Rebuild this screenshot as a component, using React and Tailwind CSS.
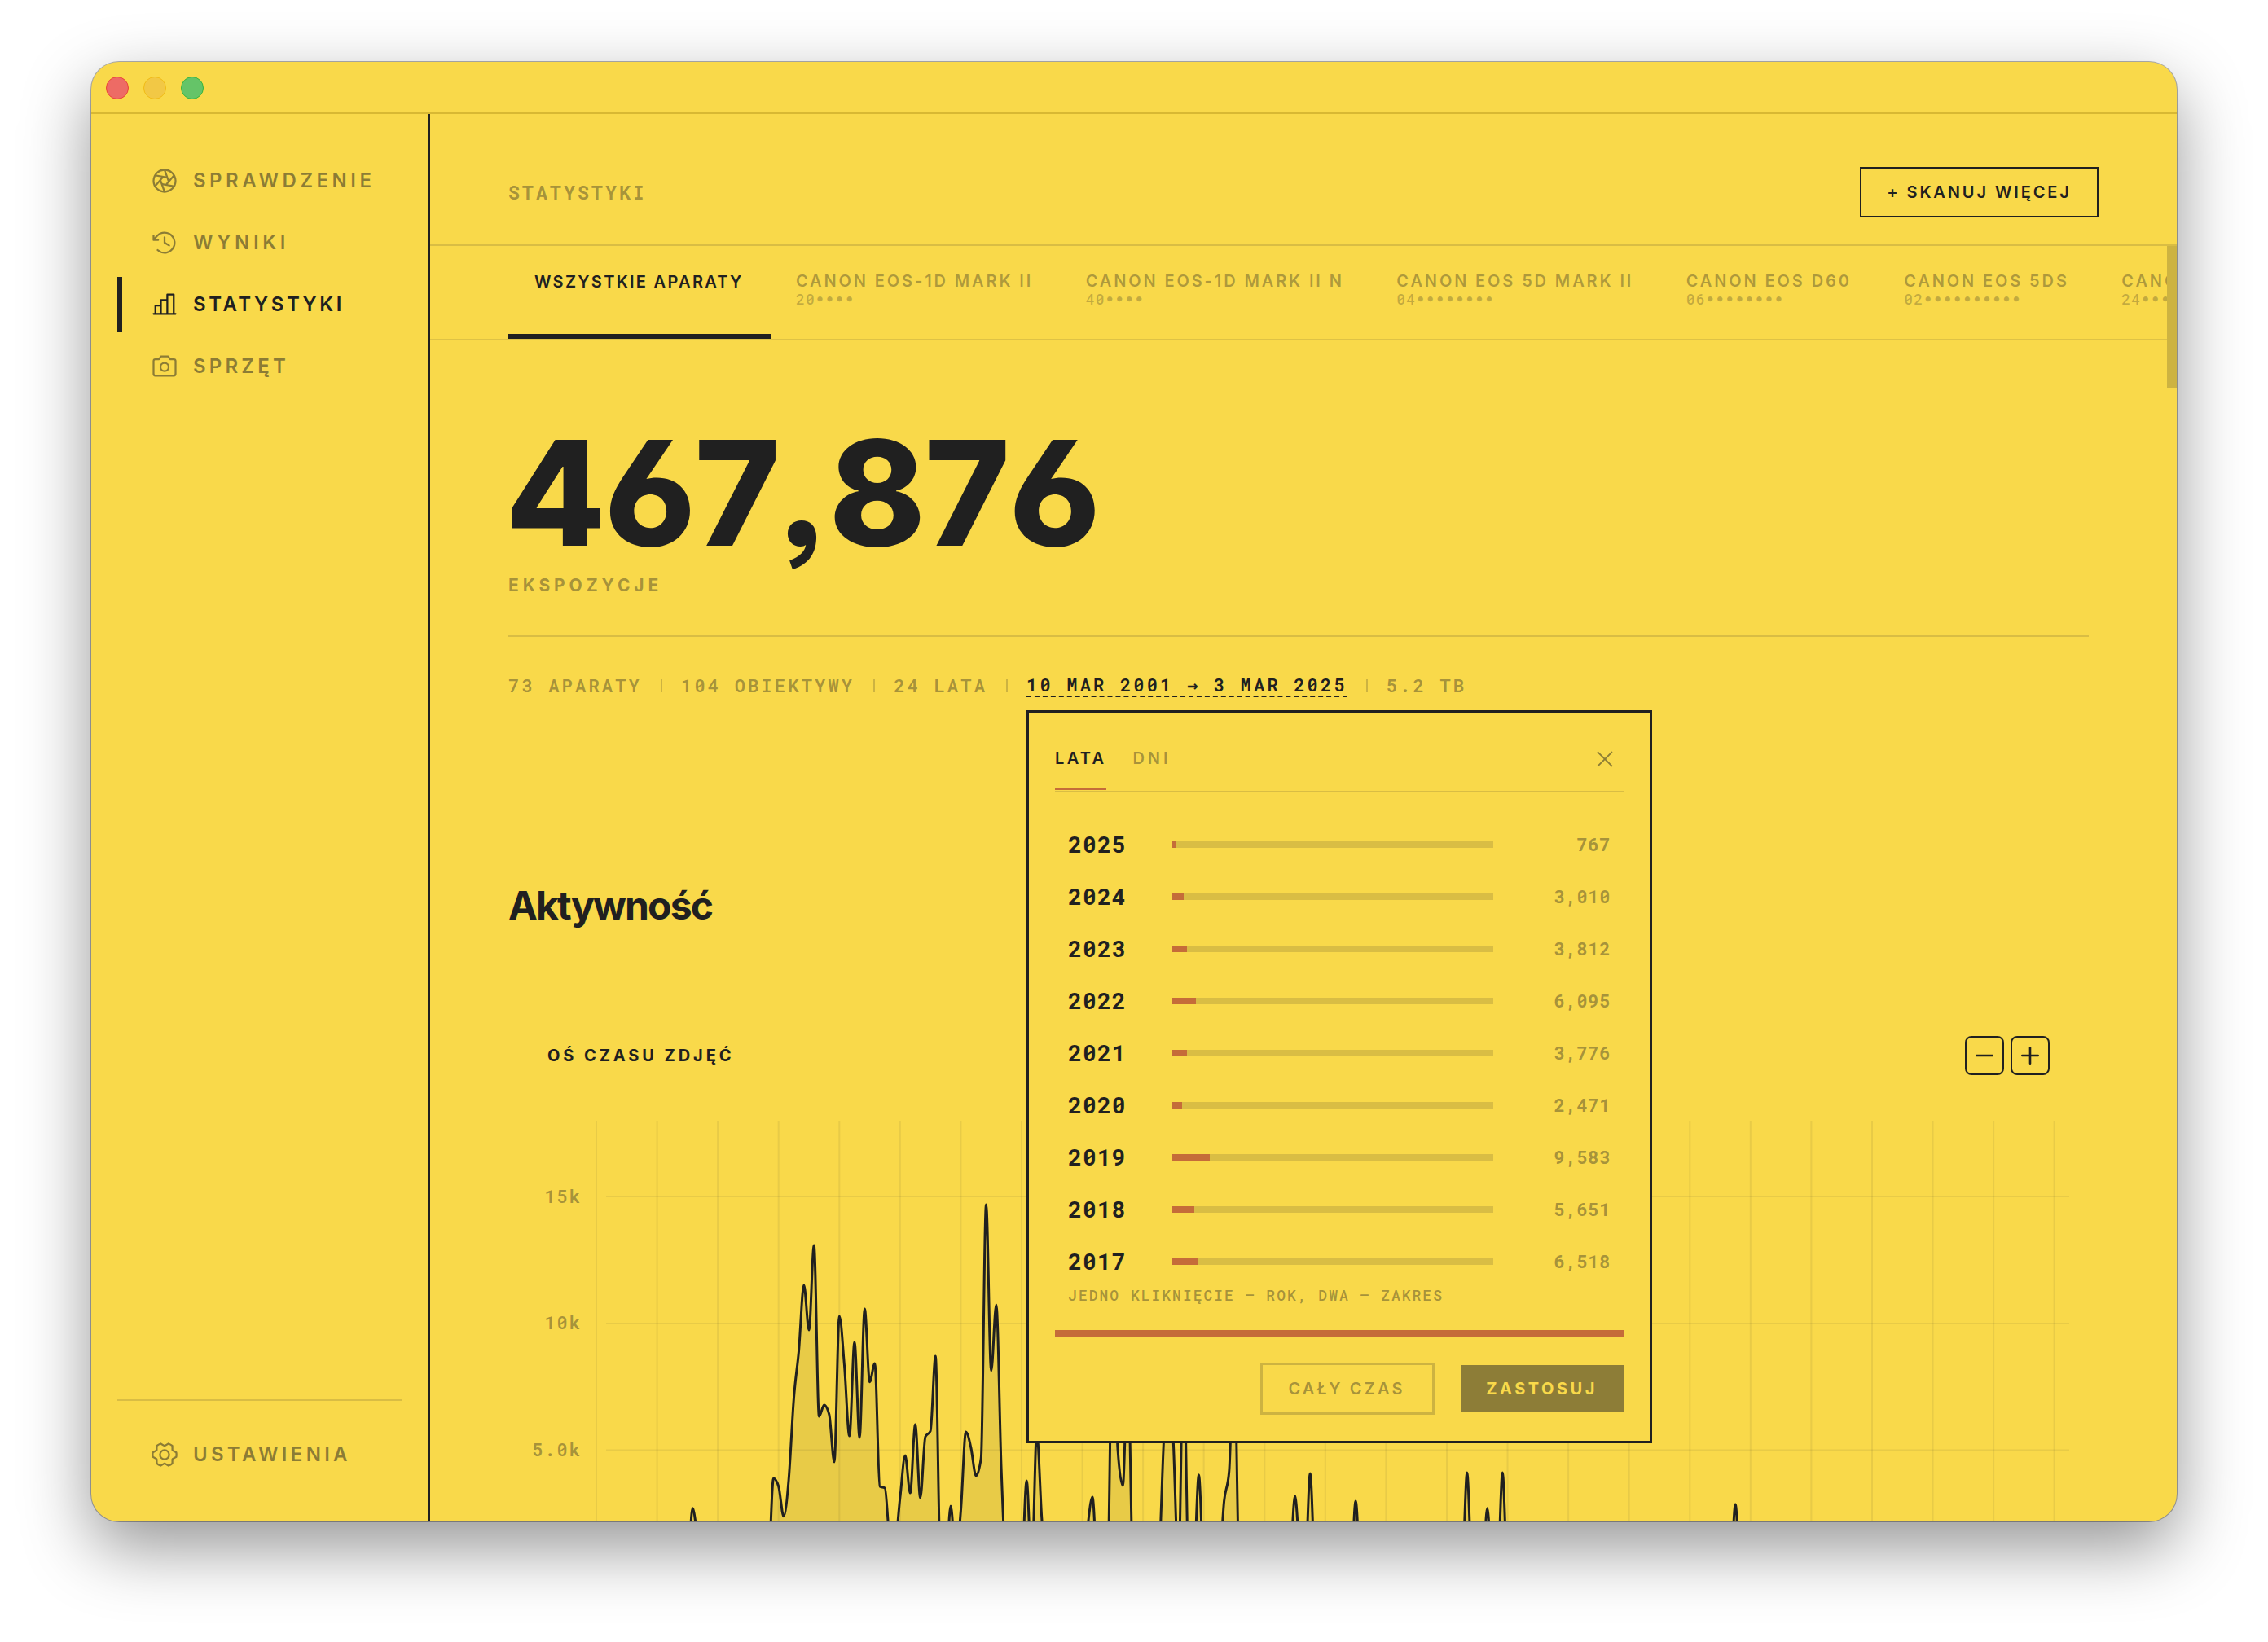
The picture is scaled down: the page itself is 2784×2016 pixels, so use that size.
import { useState } from 'react';
import { PiAperture, PiClockCounterClockwise, PiChartBar, PiCamera, PiGearSix, PiX } from 'react-icons/pi';

const NAV = [
  { id: 'check', label: 'SPRAWDZENIE', icon: PiAperture, spacing: 'tracking-[4.5px]' },
  { id: 'results', label: 'WYNIKI', icon: PiClockCounterClockwise, spacing: 'tracking-[4.7px]' },
  { id: 'stats', label: 'STATYSTYKI', icon: PiChartBar, spacing: 'tracking-[3.55px]' },
  { id: 'gear', label: 'SPRZĘT', icon: PiCamera, spacing: 'tracking-[4.2px]' },
];

const CAMERAS = [
  { name: 'CANON EOS-1D MARK II', serial: '20', hidden: '••••' },
  { name: 'CANON EOS-1D MARK II N', serial: '40', hidden: '••••' },
  { name: 'CANON EOS 5D MARK II', serial: '04', hidden: '••••••••' },
  { name: 'CANON EOS D60', serial: '06', hidden: '••••••••' },
  { name: 'CANON EOS 5DS', serial: '02', hidden: '••••••••••' },
  { name: 'CANON EOS 6D', serial: '24', hidden: '••••••••••' },
];

const YEARS = [
  { year: 2025, count: 767 },
  { year: 2024, count: 3010 },
  { year: 2023, count: 3812 },
  { year: 2022, count: 6095 },
  { year: 2021, count: 3776 },
  { year: 2020, count: 2471 },
  { year: 2019, count: 9583 },
  { year: 2018, count: 5651 },
  { year: 2017, count: 6518 },
];
const YEAR_MAX = 83000;

// month index -> number of photos, quiet months are left out
const MONTHS = {
  18: 180, 19: 2700, 20: 1600, 21: 500,
  34: 500, 35: 3880, 36: 3560, 37: 2380, 38: 3816, 39: 7030, 40: 8930, 41: 11510, 42: 9730, 43: 13075, 44: 6325,
  45: 6774, 46: 6390, 47: 4525, 48: 10280, 49: 8330, 50: 5550, 51: 9260, 52: 5490, 53: 10570, 54: 7685, 55: 8415,
  56: 3560, 57: 3495, 58: 1500, 59: 1400, 60: 3100, 61: 4780, 62: 3300, 63: 6000, 64: 3110, 65: 5520, 66: 5745,
  67: 8705, 68: 400, 69: 280, 70: 2790, 71: 800, 72: 2600, 73: 5715, 74: 5100, 75: 3980, 76: 4685, 77: 14685,
  78: 8125, 79: 10730, 80: 4265, 81: 300,
  84: 300, 85: 3785, 86: 300, 87: 5700, 88: 2300, 89: 300,
  97: 1900, 98: 3140, 99: 300,
  101: 300, 102: 11000, 103: 5000, 104: 3590, 105: 8500, 106: 300,
  111: 400, 112: 5000, 113: 9500, 114: 5260, 115: 300, 116: 9000, 117: 300,
  118: 300, 119: 4020, 120: 300,
  123: 400, 124: 2980, 125: 4170, 126: 9000, 127: 300,
  137: 500, 138: 3185, 139: 900, 140: 300, 141: 4075, 142: 300,
  150: 2980, 172: 4105, 176: 2700, 179: 4105, 225: 2850,
};

const YEAR_STEP = 74.57;
const LEFT = 108;
const ZERO = 615.7;
const TICKS = [
  { value: 15000, label: '15k' },
  { value: 10000, label: '10k' },
  { value: 5000, label: '5.0k' },
];
const yOf = (v) => ZERO - (v / 5000) * 155.5;

// monotone cubic through the points, so that it never overshoots a peak
function smooth(pts) {
  const n = pts.length;
  const slope = (i) => (pts[i + 1][1] - pts[i][1]) / (pts[i + 1][0] - pts[i][0]);
  const t = pts.map((_, i) => {
    if (i === 0 || i === n - 1) return 0;
    const a = slope(i - 1);
    const b = slope(i);
    if (a * b <= 0) return 0;
    return Math.sign(a) * Math.min(Math.abs(a), Math.abs(b), Math.abs(a + b) / 4) * 2;
  });
  let d = `M${pts[0][0].toFixed(1)},${pts[0][1].toFixed(1)}`;
  for (let i = 0; i < n - 1; i++) {
    const [x0, y0] = pts[i];
    const [x1, y1] = pts[i + 1];
    const h = (x1 - x0) / 3;
    d += `C${(x0 + h).toFixed(1)},${(y0 + t[i] * h).toFixed(1)} ${(x1 - h).toFixed(1)},${(y1 - t[i + 1] * h).toFixed(1)} ${x1.toFixed(1)},${y1.toFixed(1)}`;
  }
  return d;
}

function Timeline() {
  const pts = Array.from({ length: 289 }, (_, i) => [LEFT + (i * YEAR_STEP) / 12, yOf(MONTHS[i] ?? 150)]);
  const line = smooth(pts);
  return (
    <svg width="1940" height="640" viewBox="0 0 1940 640" className="block shrink-0">
      {Array.from({ length: 25 }, (_, i) => (
        <line key={i} x1={LEFT + i * YEAR_STEP} x2={LEFT + i * YEAR_STEP} y1="56" y2={ZERO} stroke="#202020" strokeOpacity="0.08" strokeWidth="2" />
      ))}
      {TICKS.map((tick) => (
        <g key={tick.label}>
          <line x1="120" x2="1916" y1={yOf(tick.value)} y2={yOf(tick.value)} stroke="#202020" strokeOpacity="0.08" strokeWidth="1.5" />
          <text x="90" y={yOf(tick.value) + 7.5} textAnchor="end" className="font-['Roboto_Mono','DejaVu_Sans_Mono',monospace] text-[22px] font-semibold tracking-[2px] fill-[#202020]/40">{tick.label}</text>
        </g>
      ))}
      <path d={`${line}L${pts[288][0]},${ZERO}L${LEFT},${ZERO}Z`} fill="#202020" fillOpacity="0.08" />
      <path d={line} fill="none" stroke="#202020" strokeWidth="3" strokeLinejoin="round" />
    </svg>
  );
}

function Separator() {
  return <span className="mx-[23px] mt-2 h-4 w-[2px] bg-[#202020]/20"></span>;
}

function RangePopover() {
  const [mode, setMode] = useState('years');
  return (
    <div className="absolute left-0 top-[46px] z-10 w-[768px] h-[900px] border-3 border-[#202020] bg-[#f9d94a] px-8 font-['Inter',sans-serif]">
      <div className="flex h-[98px] items-end border-b-2 border-[#202020]/15">
        <div className="flex flex-1 gap-8 pb-px text-xl leading-6">
          <button onClick={() => setMode('years')} className={`border-b-3 pb-6 font-semibold tracking-[3.3px] ${mode === 'years' ? 'border-[#c56c39] text-[#202020]' : 'border-transparent text-[#202020]/40'}`}>LATA</button>
          <button onClick={() => setMode('days')} className={`border-b-3 pb-6 font-semibold tracking-[4px] ${mode === 'days' ? 'border-[#c56c39] text-[#202020]' : 'border-transparent text-[#202020]/40'}`}>DNI</button>
        </div>
        <button className="mb-4 flex size-[46px] items-center justify-center text-[#202020]/50">
          <PiX size={30} />
        </button>
      </div>

      <div className="mt-8 px-4 font-['Roboto_Mono','DejaVu_Sans_Mono',monospace]">
        {YEARS.map((row) => (
          <div key={row.year} className="flex h-16 items-center gap-8">
            <span className="w-24 text-[28px] leading-8 font-bold tracking-[1.1px] text-[#202020]">{row.year}</span>
            <div className="h-2 w-[394px] bg-[#202020]/15">
              <div className="h-2 bg-[#c56c39]" style={{ width: `${(row.count / YEAR_MAX) * 100}%` }}></div>
            </div>
            <span className="w-28 text-right text-[22px] leading-8 font-bold tracking-[0.7px] text-[#202020]/40">{row.count.toLocaleString('en-US')}</span>
          </div>
        ))}
        <p className="-mt-px text-[18px] leading-5 font-medium tracking-[2px] text-[#202020]/40">JEDNO KLIKNIĘCIE — ROK, DWA — ZAKRES</p>
      </div>

      <div className="mt-[33px] h-2 bg-[#c56c39]"></div>

      <div className="mt-8 flex items-center justify-end gap-8 text-xl leading-6">
        <button className="h-16 w-[214px] border-3 border-[#202020]/20 pr-0.5 font-semibold tracking-[3.2px] text-[#202020]/40">CAŁY CZAS</button>
        <button className="h-[58px] w-[200px] bg-[#8d7d37] pr-px font-bold tracking-[3.5px] text-[#f9d94a]">ZASTOSUJ</button>
      </div>
    </div>
  );
}

export default function App() {
  const [page, setPage] = useState('stats');

  return (
    <div className="h-[2016px] w-[2784px] overflow-hidden bg-white px-28 pt-[76px] font-['Inter',sans-serif] text-[#202020]">
      <div className="flex h-[1792px] w-[2560px] flex-col overflow-hidden rounded-[34px] bg-[#f9d94a] shadow-[0_0_0_1px_rgba(0,0,0,0.3),0_32px_84px_rgba(0,0,0,0.42)]">
        {/* Title bar */}
        <div className="flex h-16 shrink-0 gap-[18px] border-b-2 border-[#d8b833] pt-[18px] pl-[18px]">
          <span className="size-7 rounded-full border border-[#ea4436] bg-[#ed6b65]"></span>
          <span className="size-7 rounded-full border border-[#f0bb14] bg-[#f2c845]"></span>
          <span className="size-7 rounded-full border border-[#38b43c] bg-[#65c468]"></span>
        </div>

        <div className="flex min-h-0 flex-1">
          {/* Sidebar */}
          <nav className="flex w-[416px] shrink-0 flex-col border-r-3 border-[#202020] px-8 py-12 text-2xl leading-8 font-semibold">
            <div className="flex flex-col gap-2">
              {NAV.map(({ id, label, icon: Icon, spacing }) => (
                <button key={id} onClick={() => setPage(id)} className={`flex h-[68px] items-center gap-[17px] border-l-6 pl-[34px] ${page === id ? 'border-[#202020] text-[#202020]' : 'border-transparent text-[#202020]/50'}`}>
                  <Icon size={36} className="shrink-0" />
                  <span className={`-mt-px ${spacing}`}>{label}</span>
                </button>
              ))}
            </div>
            <div className="mt-auto border-t-2 border-[#202020]/15 pt-8">
              <button className="flex h-[68px] items-center gap-[17px] border-l-6 border-transparent pl-[34px] text-[#202020]/50">
                <PiGearSix size={36} className="shrink-0" />
                <span className="-mt-px tracking-[4.3px]">USTAWIENIA</span>
              </button>
            </div>
          </nav>

          <main className="flex min-w-0 flex-1 flex-col">
            {/* Page header */}
            <header className="flex h-[162px] shrink-0 items-center justify-between border-b-2 border-[#202020]/15 px-24 pt-8">
              <h1 className="font-['Roboto_Mono','DejaVu_Sans_Mono',monospace] text-[23px] leading-8 font-bold tracking-[3.2px] text-[#202020]/40">STATYSTYKI</h1>
              <button className="h-[62px] w-[293px] border-2 border-[#202020] text-xl font-semibold tracking-[2.9px] whitespace-nowrap">+ SKANUJ WIĘCEJ</button>
            </header>

            <div className="flex min-h-0 flex-1">
              <div className="min-w-0 flex-1 overflow-hidden">
                {/* Camera tabs */}
                <div className="flex h-[116px] overflow-hidden border-b-2 border-[#202020]/12 pl-24 whitespace-nowrap">
                  <div className="w-[322px] shrink-0 border-b-6 border-[#202020] pt-[30px] pl-8 text-xl leading-[29px] font-semibold tracking-[2.3px]">WSZYSTKIE APARATY</div>
                  {CAMERAS.map((cam) => (
                    <div key={cam.name} className="shrink-0 pt-[31px] pr-[33.5px] pl-[31px]">
                      <p className="text-xl leading-[25px] font-semibold tracking-[2.88px] text-[#202020]/35">{cam.name}</p>
                      <p className="-mt-px font-['Roboto_Mono','DejaVu_Sans_Mono',monospace] text-[18px] leading-5 font-medium tracking-[1.2px] text-[#202020]/25">
                        {cam.serial}<span className="font-['DejaVu_Sans_Mono',monospace] font-bold">{cam.hidden}</span>
                      </p>
                    </div>
                  ))}
                </div>

                <div className="px-24">
                  {/* Total */}
                  <div className="-ml-[4px] pt-[97px] text-[179px] leading-[180px] font-extrabold tracking-[-1.6px] [font-kerning:none] [font-feature-settings:'cv03','cv04','ss03']">467,876</div>
                  <p className="mt-[9px] text-[21px] leading-[30px] font-bold tracking-[4.9px] text-[#202020]/40">EKSPOZYCJE</p>

                  <div className="mt-[46px] flex items-start border-t-2 border-[#202020]/15 pt-11 font-['Roboto_Mono','DejaVu_Sans_Mono',monospace] text-[22px] leading-8 font-semibold tracking-[3.2px] whitespace-nowrap text-[#202020]/40">
                    <span>73 APARATY</span>
                    <Separator />
                    <span>104 OBIEKTYWY</span>
                    <Separator />
                    <span>24 LATA</span>
                    <Separator />
                    <div className="relative">
                      <button className="block h-[30px] border-b-2 border-dashed border-[#202020] pt-[2px] leading-[26px] text-[#202020]">10 MAR 2001 → 3 MAR 2025</button>
                      <RangePopover />
                    </div>
                    <Separator />
                    <span>5.2 TB</span>
                  </div>

                  {/* Activity */}
                  <h2 className="mt-56 text-[48px] leading-[60px] font-bold tracking-[-1.8px]">Aktywność</h2>
                  <div className="mt-[130px] flex h-12 items-center justify-between px-12">
                    <h3 className="text-xl font-bold tracking-[3.9px]">OŚ CZASU ZDJĘĆ</h3>
                    <div className="flex gap-2">
                      <button className="flex size-12 items-center justify-center rounded-lg border-2 border-[#202020]">
                        <svg width="24" height="24" viewBox="0 0 24 24" stroke="currentColor" strokeWidth="2.6" strokeLinecap="round"><path d="M2.3 12h19.4" /></svg>
                      </button>
                      <button className="flex size-12 items-center justify-center rounded-lg border-2 border-[#202020]">
                        <svg width="24" height="24" viewBox="0 0 24 24" stroke="currentColor" strokeWidth="2.6" strokeLinecap="round"><path d="M2.3 12h19.4M12 2.3v19.4" /></svg>
                      </button>
                    </div>
                  </div>
                  <Timeline />
                </div>
              </div>

              {/* Scrollbar */}
              <div className="w-3 shrink-0">
                <div className="h-[174px] bg-[#202020]/20"></div>
              </div>
            </div>
          </main>
        </div>
      </div>
    </div>
  );
}
